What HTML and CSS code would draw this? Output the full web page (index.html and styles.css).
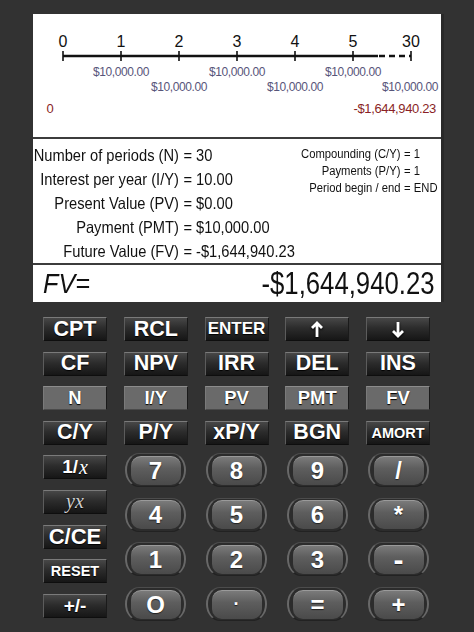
FILE: index.html
```html
<!DOCTYPE html>
<html lang="en">
<head>
    <meta charset="UTF-8">
    <title>TVM Calculator</title>
    <link rel="stylesheet" href="styles.css">
</head>
<body>
    <!-- display panel -->
    <div class="screen">
        <!-- cash flow timeline -->
        <svg class="timeline" width="408" height="123" viewBox="0 0 408 123">
            <g class="tick-num">
                <text x="30" y="33">0</text>
                <text x="88" y="33">1</text>
                <text x="146" y="33">2</text>
                <text x="204" y="33">3</text>
                <text x="262" y="33">4</text>
                <text x="320" y="33">5</text>
                <text x="378" y="33">30</text>
            </g>
            <line x1="30" y1="42" x2="345" y2="42" stroke="#111" stroke-width="2.5"/>
            <line x1="346" y1="42" x2="378" y2="42" stroke="#111" stroke-width="2.5" stroke-dasharray="6 4"/>
            <path d="M30 37v10M88 37v10M146 37v10M204 37v10M262 37v10M320 37v10M378 37v10" stroke="#111" stroke-width="1.6"/>
            <g class="pmt">
                <text x="88" y="62">$10,000.00</text>
                <text x="204" y="62">$10,000.00</text>
                <text x="320" y="62">$10,000.00</text>
                <text x="146" y="77">$10,000.00</text>
                <text x="262" y="77">$10,000.00</text>
                <text x="377" y="77">$10,000.00</text>
            </g>
            <text class="flow" x="17" y="99" text-anchor="middle">0</text>
            <text class="flow" x="403" y="99" text-anchor="end">-$1,644,940.23</text>
        </svg>

        <!-- entered values -->
        <div class="info">
            <div class="terms">
                <div class="row"><span class="lbl">Number of periods (N)</span><span class="val">= 30</span></div>
                <div class="row"><span class="lbl">Interest per year (I/Y)</span><span class="val">= 10.00</span></div>
                <div class="row"><span class="lbl">Present Value (PV)</span><span class="val">= $0.00</span></div>
                <div class="row"><span class="lbl">Payment (PMT)</span><span class="val">= $10,000.00</span></div>
                <div class="row"><span class="lbl">Future Value (FV)</span><span class="val">= -$1,644,940.23</span></div>
            </div>
            <div class="modes">
                <div class="row"><span class="lbl">Compounding (C/Y)</span><span class="val">= 1</span></div>
                <div class="row"><span class="lbl">Payments (P/Y)</span><span class="val">= 1</span></div>
                <div class="row"><span class="lbl">Period begin / end</span><span class="val">= END</span></div>
            </div>
        </div>

        <!-- result line -->
        <div class="result">
            <span class="result-name">FV=</span>
            <span class="result-value">-$1,644,940.23</span>
        </div>
    </div>

    <!-- keypad -->
    <div class="keys">
        <div class="fn-grid">
            <div class="btn">CPT</div>
            <div class="btn">RCL</div>
            <div class="btn small">ENTER</div>
            <div class="btn">
                <svg class="arrow" width="12" height="17" viewBox="0 0 12 17"><path d="M6 16V2M1 7l5-5 5 5" fill="none" stroke="#fff" stroke-width="2.8"/></svg>
            </div>
            <div class="btn">
                <svg class="arrow" width="12" height="17" viewBox="0 0 12 17"><path d="M6 1v14M1 10l5 5 5-5" fill="none" stroke="#fff" stroke-width="2.8"/></svg>
            </div>

            <div class="btn">CF</div>
            <div class="btn">NPV</div>
            <div class="btn">IRR</div>
            <div class="btn">DEL</div>
            <div class="btn">INS</div>

            <div class="btn tvm">N</div>
            <div class="btn tvm">I/Y</div>
            <div class="btn tvm">PV</div>
            <div class="btn tvm">PMT</div>
            <div class="btn tvm">FV</div>

            <div class="btn">C/Y</div>
            <div class="btn">P/Y</div>
            <div class="btn">xP/Y</div>
            <div class="btn">BGN</div>
            <div class="btn tiny">AMORT</div>
        </div>

        <div class="lower">
            <div class="side">
                <div class="btn mid">1/<i class="math">x</i></div>
                <div class="btn"><i class="math dim">yx</i></div>
                <div class="btn big">C/CE</div>
                <div class="btn tiny">RESET</div>
                <div class="btn mid">+/-</div>
            </div>
            <div class="num-grid">
                <div class="key"><span>7</span></div>
                <div class="key"><span>8</span></div>
                <div class="key"><span>9</span></div>
                <div class="key"><span>/</span></div>

                <div class="key"><span>4</span></div>
                <div class="key"><span>5</span></div>
                <div class="key"><span>6</span></div>
                <div class="key"><span>*</span></div>

                <div class="key"><span>1</span></div>
                <div class="key"><span>2</span></div>
                <div class="key"><span>3</span></div>
                <div class="key"><span class="minus">-</span></div>

                <div class="key"><span>O</span></div>
                <div class="key"><span class="dot">&middot;</span></div>
                <div class="key"><span>=</span></div>
                <div class="key"><span>+</span></div>
            </div>
        </div>
    </div>
</body>
</html>
```

FILE: styles.css
```css
body {
    margin: 0;
    width: 474px;
    height: 632px;
    overflow: hidden;
    background-color: #323232;
    font-family: "Liberation Sans", Arial, sans-serif;
}

/* display */
.screen {
    width: 408px;
    margin: 14px 0 0 33px;
    background: #fff;
    box-shadow: 3px 0 0 #292929;
}

.timeline {
    display: block;
    border-bottom: 2px solid #3c3c3c;
}

.tick-num text {
    font-size: 16px;
    fill: #111;
    text-anchor: middle;
}

.pmt text {
    font-size: 12px;
    letter-spacing: -0.4px;
    fill: #58557a;
    text-anchor: middle;
}

.flow {
    font-size: 13px;
    letter-spacing: -0.35px;
    fill: #8a1f26;
}

.info {
    display: flex;
    height: 124px;
    color: #111;
    border-bottom: 2px solid #3c3c3c;
    overflow: hidden;
}

.row {
    display: flex;
    white-space: nowrap;
}

.row .lbl {
    flex: none;
    text-align: right;
}

/* the original face is a narrow grotesque, so squeeze the text a bit */
.terms {
    flex: none;
    width: 264px;
    min-width: 0;
    padding-top: 4px;
    font-size: 16.5px;
    line-height: 24px;
    transform: scaleX(0.89);
    transform-origin: 0 0;
}

.terms .lbl {
    width: 164px;
}

.terms .val {
    padding-left: 5px;
}

.modes {
    flex: none;
    padding-top: 7px;
    font-size: 12.5px;
    line-height: 17px;
    transform: scaleX(0.9);
    transform-origin: 0 0;
}

.modes .lbl {
    width: 115px;
}

.modes .val {
    padding-left: 4px;
}

.result {
    display: flex;
    justify-content: space-between;
    align-items: center;
    height: 37px;
    padding: 0 6px 0 10px;
    color: #111;
}

.result-name {
    font-size: 28px;
    font-style: italic;
    transform: scaleX(0.9);
    transform-origin: 0 50%;
}

.result-value {
    font-size: 31px;
    transform: scaleX(0.83);
    transform-origin: 100% 50%;
}

/* keypad */
.keys {
    padding: 15px 0 0 43px;
}

.fn-grid {
    display: grid;
    grid-template-columns: repeat(5, 64px);
    grid-auto-rows: 24px;
    column-gap: 16.75px;
    row-gap: 10.5px;
}

.btn {
    display: flex;
    justify-content: center;
    align-items: center;
    box-sizing: border-box;
    height: 24px;
    background: linear-gradient(#474747, #2c2c2c 45%, #161616);
    border-top: 1px solid #7a7a7a;
    border-left: 1px solid #5c5c5c;
    border-right: 1px solid #1a1a1a;
    border-bottom: 1px solid #0e0e0e;
    color: #fff;
    font-weight: bold;
    font-size: 21.5px;
    text-shadow: 0 1px 1px #000;
}

.btn.small {
    font-size: 17px;
}

.btn.tiny {
    font-size: 14.5px;
}

.btn.mid {
    font-size: 19px;
}

.btn.big {
    font-size: 22px;
}

.btn.tvm {
    background: #6a6a6a;
    border-top-color: #8c8c8c;
    border-left-color: #7a7a7a;
    border-bottom-color: #4a4a4a;
    font-size: 18.5px;
}

.arrow {
    filter: drop-shadow(0 1px 1px #000);
}

.math {
    font-family: "Liberation Serif", "Times New Roman", serif;
    font-weight: normal;
    font-size: 20px;
    margin-left: 1px;
}

.math.dim {
    color: #cfcfcf;
    margin: 0;
}

.lower {
    display: flex;
    margin-top: 8.5px;
}

.side {
    display: flex;
    flex-direction: column;
    gap: 10.75px;
    width: 64px;
    padding-top: 2px;
}

.num-grid {
    display: grid;
    grid-template-columns: repeat(4, 61px);
    grid-auto-rows: 34px;
    column-gap: 20px;
    row-gap: 10.7px;
    margin-left: 18px;
}

/* number keys with bracket ring */
.key {
    display: flex;
    justify-content: center;
    align-items: center;
    box-sizing: border-box;
    border-radius: 14px / 17px;
    background: #2c2c2c;
    border-left: 2px solid #686868;
    border-right: 2px solid #686868;
    border-top: 1px solid #4c4c4c;
    border-bottom: 1px solid #222;
}

.key span {
    display: flex;
    justify-content: center;
    align-items: center;
    box-sizing: border-box;
    width: 50px;
    height: 29px;
    border-radius: 10px;
    background: linear-gradient(#7a7a7a, #5e5e5e 40%, #4a4a4a);
    border-top: 1px solid #9a9a9a;
    color: #fff;
    font-weight: bold;
    font-size: 24px;
    text-shadow: 0 1px 1px #222;
}

.key .minus {
    font-size: 30px;
}

.key .dot {
    font-size: 18px;
}
```
